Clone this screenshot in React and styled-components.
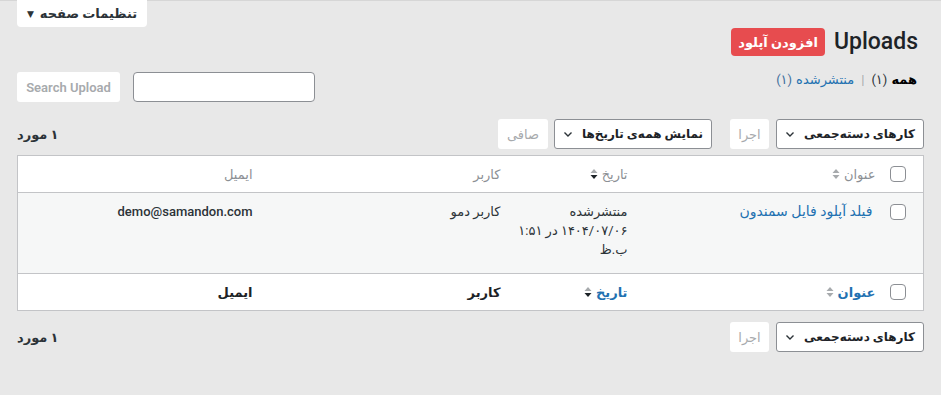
import React from 'react';
import styled, { createGlobalStyle } from 'styled-components';

const GlobalStyle = createGlobalStyle`
  html, body {
    margin: 0;
    padding: 0;
    background: #e8e8e8;
  }
  body {
    font-family: Roboto, "DejaVu Sans", sans-serif;
    font-size: 13px;
    color: #1d2327;
  }
`;

const Page = styled.div`
  direction: rtl;
  min-height: 395px;
  border-top: 1px solid #d6d6d6;
  box-sizing: border-box;
`;

const ScreenMeta = styled.div`
  display: flex;
  justify-content: flex-end;
  padding-left: 17px;
  margin-top: -1px;
`;

const MetaButton = styled.div`
  width: 130px;
  height: 27px;
  background: #fff;
  border-radius: 0 0 4px 4px;
  display: flex;
  align-items: center;
  justify-content: center;
  gap: 6px;
  font-size: 13px;
  font-weight: 600;
  color: #2c3338;
  white-space: nowrap;

  span.arrow {
    font-size: 9px;
  }
`;

const Wrap = styled.div`
  padding: 0 17px;
`;

const Heading = styled.div`
  display: flex;
  align-items: center;
  gap: 9px;
  height: 28px;
  margin-top: 1px;
  padding-right: 6px;
`;

const Title = styled.h1`
  margin: 0;
  font-family: Roboto, sans-serif;
  font-size: 23px;
  font-weight: 500;
  color: #1d2327;
  line-height: 28px;
`;

const AddButton = styled.div`
  height: 28px;
  padding: 0 7px;
  background: #e74c4f;
  color: #fff;
  border-radius: 4px;
  display: flex;
  align-items: center;
  font-size: 13px;
  font-weight: 700;
  white-space: nowrap;
`;

const FilterRow = styled.div`
  display: flex;
  align-items: center;
  justify-content: space-between;
  height: 30px;
  margin-top: 16px;
  padding-right: 7px;
`;

const Views = styled.div`
  display: flex;
  align-items: center;
  gap: 4px;
  font-size: 13px;
  margin-top: -15px;
`;

const Current = styled.span`
  font-weight: 700;
  color: #000;
`;

const Count = styled.span`
  color: ${(p) => (p.$link ? '#3f6f9c' : '#2c3338')};
`;

const Sep = styled.span`
  color: #a7aaad;
  margin: 0 3px;
`;

const ViewLink = styled.span`
  color: #2271b1;
`;

const SearchBox = styled.div`
  display: flex;
  align-items: center;
  gap: 13px;
`;

const SearchInput = styled.div`
  width: 182px;
  height: 30px;
  box-sizing: border-box;
  background: #fff;
  border: 1px solid #8c8f94;
  border-radius: 4px;
`;

const GhostButton = styled.div`
  height: 30px;
  width: ${(p) => p.$w}px;
  box-sizing: border-box;
  background: #fff;
  border-radius: 3px;
  display: flex;
  align-items: center;
  justify-content: center;
  color: #a7aaad;
  font-size: 13px;
  font-weight: ${(p) => (p.$latin ? 600 : 400)};
  font-family: ${(p) => (p.$latin ? 'Roboto, sans-serif' : 'inherit')};
  white-space: nowrap;
`;

const TableNav = styled.div`
  display: flex;
  align-items: center;
  height: 30px;
  margin-top: ${(p) => p.$top}px;
`;

const Group = styled.div`
  display: flex;
  align-items: center;
  gap: ${(p) => p.$gap}px;
  margin-left: ${(p) => p.$after || 0}px;
`;

const Select = styled.div`
  width: ${(p) => p.$w}px;
  height: 30px;
  box-sizing: border-box;
  background: #fff;
  border: 1px solid #8c8f94;
  border-radius: 3px;
  display: flex;
  align-items: center;
  justify-content: space-between;
  padding: 0 8px 0 8px;
  font-size: 12px;
  font-weight: 700;
  color: #1d2327;
  white-space: nowrap;
  overflow: hidden;
`;

const ItemCount = styled.div`
  margin-right: auto;
  font-size: 13px;
  font-weight: 700;
  color: #2c3338;
`;

const Table = styled.table`
  width: 100%;
  margin-top: 6px;
  border-collapse: collapse;
  background: #fff;
  border: 1px solid #c3c4c7;
  table-layout: fixed;
`;

const HeadCell = styled.th`
  box-sizing: border-box;
  height: 37px;
  padding: 0 9px;
  text-align: right;
  font-weight: ${(p) => (p.$foot ? 700 : 400)};
  font-size: 13px;
  color: ${(p) => (p.$foot ? '#1d2327' : '#8c8f94')};
  border-bottom: ${(p) => (p.$foot ? 'none' : '1px solid #c3c4c7')};
  border-top: ${(p) => (p.$foot ? '1px solid #c3c4c7' : 'none')};
  width: ${(p) => (p.$w ? `${p.$w}px` : 'auto')};
  vertical-align: middle;
  white-space: nowrap;
`;

const CheckHead = styled(HeadCell)`
  padding: 0;
`;

const Sortable = styled.span`
  display: inline-flex;
  align-items: center;
  gap: 4px;
  color: ${(p) => (p.$foot ? '#2271b1' : '#8c8f94')};
`;

const CheckCell = styled.td`
  box-sizing: border-box;
  width: 39px;
  padding: 11px 0 0;
  vertical-align: top;
`;

const Checkbox = styled.div`
  width: 16px;
  height: 16px;
  box-sizing: border-box;
  border: 1px solid #8c8f94;
  border-radius: 4px;
  background: #fff;
  margin-right: 17px;
`;

const Row = styled.tr`
  background: #f6f7f7;
`;

const Cell = styled.td`
  box-sizing: border-box;
  height: 81px;
  padding: 9px 9px 0;
  padding-right: ${(p) => p.$pr || 9}px;
  vertical-align: top;
  text-align: right;
  font-size: 13px;
  line-height: 19px;
  color: #2c3338;
  font-family: ${(p) => (p.$latin ? 'Roboto, sans-serif' : 'inherit')};
  font-weight: ${(p) => (p.$latin ? 500 : 400)};
`;

const Line = styled.div`
  white-space: nowrap;
`;

const RowTitle = styled.span`
  color: #2271b1;
  font-size: 14px;
  font-weight: 400;
`;

function Chevron() {
  return (
    <svg width="10" height="10" viewBox="0 0 10 10" style={{ flexShrink: 0 }}>
      <path d="M1.5 3.5 L5 7 L8.5 3.5" fill="none" stroke="#2c3338" strokeWidth="1.4" />
    </svg>
  );
}

function SortIcon({ active }) {
  return (
    <svg width="8" height="12" viewBox="0 0 8 12">
      <path d="M4 1 L7.5 5 L0.5 5 Z" fill="#a7aaad" />
      <path d="M4 11 L7.5 7 L0.5 7 Z" fill={active ? '#1d2327' : '#a7aaad'} />
    </svg>
  );
}

function HeaderRow({ foot }) {
  return (
    <tr>
      <CheckHead $foot={foot} $w={39}>
        <Checkbox />
      </CheckHead>
      <HeadCell $foot={foot} $w={248}>
        <Sortable $foot={foot}>
          عنوان <SortIcon />
        </Sortable>
      </HeadCell>
      <HeadCell $foot={foot} $w={127}>
        <Sortable $foot={foot}>
          تاریخ <SortIcon active />
        </Sortable>
      </HeadCell>
      <HeadCell $foot={foot} $w={248}>کاربر</HeadCell>
      <HeadCell $foot={foot}>ایمیل</HeadCell>
    </tr>
  );
}

function BulkActions({ after }) {
  return (
    <Group $gap={7} $after={after}>
      <Select $w={148}>
        کارهای دسته‌جمعی <Chevron />
      </Select>
      <GhostButton $w={39}>اجرا</GhostButton>
    </Group>
  );
}

export default function App() {
  return (
    <Page>
      <GlobalStyle />
      <ScreenMeta>
        <MetaButton>
          تنظیمات صفحه <span className="arrow">▼</span>
        </MetaButton>
      </ScreenMeta>
      <Wrap>
        <Heading>
          <Title>Uploads</Title>
          <AddButton>افزودن آپلود</AddButton>
        </Heading>
        <FilterRow>
          <Views>
            <Current>همه</Current>
            <Count>(۱)</Count>
            <Sep>|</Sep>
            <ViewLink>منتشرشده</ViewLink>
            <Count $link>(۱)</Count>
          </Views>
          <SearchBox>
            <SearchInput />
            <GhostButton $w={103} $latin>Search Upload</GhostButton>
          </SearchBox>
        </FilterRow>

        <TableNav $top={17}>
          <BulkActions after={18} />
          <Group $gap={6}>
            <Select $w={158}>
              نمایش همه‌ی تاریخ‌ها <Chevron />
            </Select>
            <GhostButton $w={50}>صافی</GhostButton>
          </Group>
          <ItemCount>۱ مورد</ItemCount>
        </TableNav>

        <Table>
          <thead>
            <HeaderRow />
          </thead>
          <tbody>
            <Row>
              <CheckCell>
                <Checkbox />
              </CheckCell>
              <Cell $pr={12}>
                <RowTitle>فیلد آپلود فایل سمندون</RowTitle>
              </Cell>
              <Cell>
                <Line>منتشرشده</Line>
                <Line>۱۴۰۴/۰۷/۰۶ در ۱:۵۱</Line>
                <Line>ب.ظ</Line>
              </Cell>
              <Cell>کاربر دمو</Cell>
              <Cell $latin>demo@samandon.com</Cell>
            </Row>
          </tbody>
          <tfoot>
            <HeaderRow foot />
          </tfoot>
        </Table>

        <TableNav $top={11}>
          <BulkActions />
          <ItemCount>۱ مورد</ItemCount>
        </TableNav>
      </Wrap>
    </Page>
  );
}
